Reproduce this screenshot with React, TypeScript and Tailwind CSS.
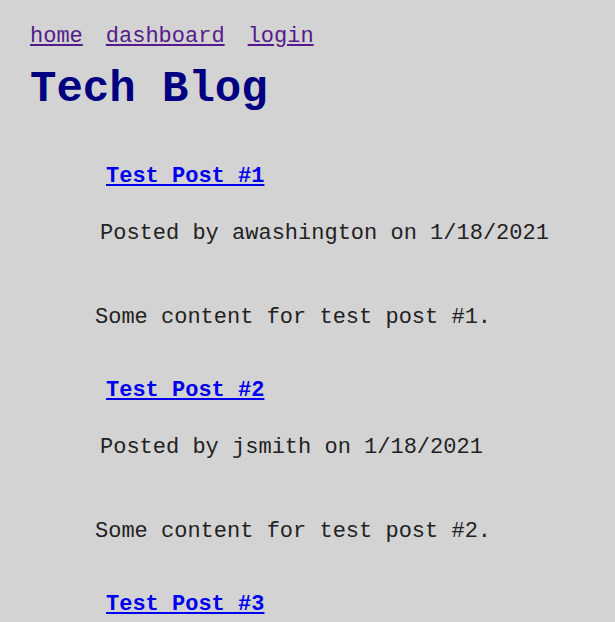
const posts = [
  { id: 1, title: "Test Post #1", author: "awashington", date: "1/18/2021", content: "Some content for test post #1." },
  { id: 2, title: "Test Post #2", author: "jsmith", date: "1/18/2021", content: "Some content for test post #2." },
]

export default function App() {
  return (
    <div className="min-h-screen bg-[#d3d3d3] px-[30px] pt-[24px] font-['Liberation_Mono','Courier_New',monospace] text-[22px] leading-[26px] text-[#222]">
      <nav className="flex gap-[23px]">
        <a href="#" className="text-[#551a8b] underline">home</a>
        <a href="#" className="text-[#551a8b] underline">dashboard</a>
        <a href="#" className="text-[#551a8b] underline">login</a>
      </nav>
      <h1 className="mt-[14px] text-[44px] leading-[50px] font-bold text-[#000080]">Tech Blog</h1>

      <div className="mt-[50px]">
        {posts.map((post) => (
          <div key={post.id} className="mb-[47px]">
            <h2 className="pl-[76px] font-bold">
              <a href="#" className="text-[#0000ee] underline">{post.title}</a>
            </h2>
            <p className="mt-[31px] pl-[70px]">
              Posted by {post.author} on {post.date}
            </p>
            <p className="mt-[58px] pl-[65px]">{post.content}</p>
          </div>
        ))}
        <h2 className="pl-[76px] font-bold">
          <a href="#" className="text-[#0000ee] underline">Test Post #3</a>
        </h2>
      </div>
    </div>
  )
}
